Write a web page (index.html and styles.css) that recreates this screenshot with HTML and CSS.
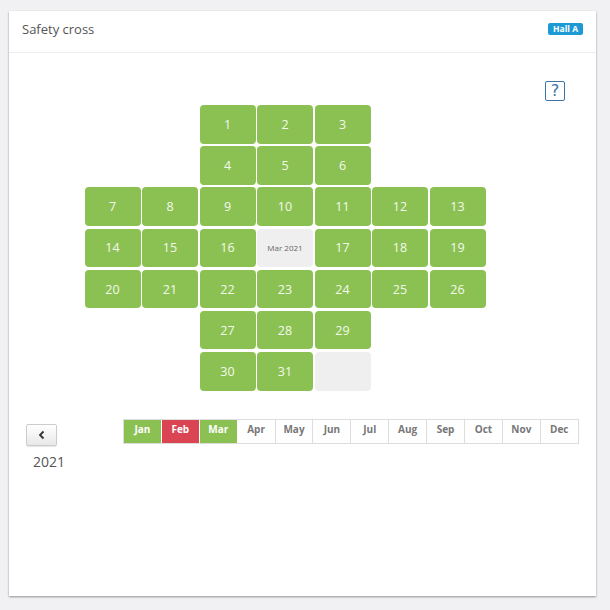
FILE: index.html
```html
<!DOCTYPE html>
<html>
<head>
<meta charset="utf-8">
<link rel="stylesheet" href="styles.css">
</head>
<body>
<div class="card">
  <div class="card-head">
    <span class="title">Safety cross</span>
    <span class="badge">Hall A</span>
  </div>
  <div class="card-body">
    <div class="help-row"><span class="help">?</span></div>
    <div class="cross">
      <div class="sp"></div><div class="sp"></div><div class="d">1</div><div class="d">2</div><div class="d">3</div><div class="sp"></div><div class="sp"></div>
      <div class="sp"></div><div class="sp"></div><div class="d">4</div><div class="d">5</div><div class="d">6</div><div class="sp"></div><div class="sp"></div>
      <div class="d">7</div><div class="d">8</div><div class="d">9</div><div class="d">10</div><div class="d">11</div><div class="d">12</div><div class="d">13</div>
      <div class="d">14</div><div class="d">15</div><div class="d">16</div><div class="label">Mar 2021</div><div class="d">17</div><div class="d">18</div><div class="d">19</div>
      <div class="d">20</div><div class="d">21</div><div class="d">22</div><div class="d">23</div><div class="d">24</div><div class="d">25</div><div class="d">26</div>
      <div class="sp"></div><div class="sp"></div><div class="d">27</div><div class="d">28</div><div class="d">29</div><div class="sp"></div><div class="sp"></div>
      <div class="sp"></div><div class="sp"></div><div class="d">30</div><div class="d">31</div><div class="empty"></div><div class="sp"></div><div class="sp"></div>
    </div>
    <div class="bottom">
      <div class="nav">
        <button class="back"><svg width="10" height="10" viewBox="0 0 10 10"><path d="M6.5 1.5 L3 5 L6.5 8.5" fill="none" stroke="#333" stroke-width="1.8"/></svg></button>
        <div class="year">2021</div>
      </div>
      <div class="months">
        <div class="m ok">Jan</div>
        <div class="m bad">Feb</div>
        <div class="m ok">Mar</div>
        <div class="m">Apr</div>
        <div class="m">May</div>
        <div class="m">Jun</div>
        <div class="m">Jul</div>
        <div class="m">Aug</div>
        <div class="m">Sep</div>
        <div class="m">Oct</div>
        <div class="m">Nov</div>
        <div class="m">Dec</div>
      </div>
    </div>
  </div>
</div>
</body>
</html>
```
FILE: styles.css
```css
html, body {
  margin: 0;
  padding: 0;
  background: #f1f1f4;
  font-family: "Open Sans", "Liberation Sans", sans-serif;
}
body {
  padding: 11px 0 0 9px;
  height: 610px;
  box-sizing: border-box;
}
.card {
  width: 587px;
  height: 585px;
  background: #fff;
  box-shadow: 0 1px 2px rgba(0,0,0,0.4);
  display: flex;
  flex-direction: column;
}
.card-head {
  height: 42px;
  box-sizing: border-box;
  border-bottom: 1px solid #eceef0;
  display: flex;
  align-items: center;
  justify-content: space-between;
  padding: 0 13px 6px 13px;
}
.title {
  font-size: 13px;
  color: #555;
}
.badge {
  background: #1d9ad6;
  color: #fff;
  font-size: 8.5px;
  font-weight: 700;
  line-height: 12px;
  padding: 0 5px;
  border-radius: 2px;
}
.card-body {
  display: flex;
  flex-direction: column;
}
.help-row {
  display: flex;
  justify-content: flex-end;
  padding: 28px 31px 0 0;
}
.help {
  width: 18px;
  height: 18px;
  border: 1.6px solid #3a74a8;
  border-radius: 2px;
  color: #3a74a8;
  font-size: 16px;
  line-height: 18px;
  text-align: center;
  font-family: "DejaVu Sans", sans-serif;
}
.cross {
  margin: 4px 0 0 75.5px;
  display: grid;
  grid-template-columns: repeat(7, 56px);
  grid-template-rows: repeat(7, 38.5px);
  column-gap: 1.5px;
  row-gap: 2.7px;
}
.d, .label, .empty {
  border-radius: 4px;
  display: flex;
  align-items: center;
  justify-content: center;
}
.d {
  background: #8bc152;
  color: #f4f9ee;
  font-size: 12.5px;
}
.label {
  background: #efefef;
  color: #666;
  font-size: 8px;
}
.empty {
  background: #efefef;
}
.bottom {
  display: flex;
  margin-top: 28px;
}
.nav {
  margin-left: 17px;
  padding-top: 5px;
  width: 97px;
}
.back {
  width: 31px;
  height: 22px;
  border: 1px solid #ccc;
  border-radius: 2px;
  background: linear-gradient(#fff, #e8e8e8);
  display: flex;
  align-items: center;
  justify-content: center;
  padding: 0;
  box-shadow: 0 1px 1px rgba(0,0,0,0.1);
}
.year {
  margin-top: 6px;
  margin-left: 7px;
  font-size: 14px;
  color: #555;
}
.months {
  display: flex;
  height: 25px;
  border: 1px solid #ddd;
  border-right: none;
  box-sizing: border-box;
}
.m {
  width: 37.9px;
  box-sizing: border-box;
  border-right: 1px solid #ddd;
  font-size: 10px;
  font-weight: 700;
  color: #777;
  text-align: center;
  line-height: 14px;
  padding-top: 2px;
}
.m.ok {
  background: #8bc152;
  color: #fff;
  border-right-color: #fff;
}
.m.bad {
  background: #da4453;
  color: #fff;
  border-right-color: #fff;
}
```
